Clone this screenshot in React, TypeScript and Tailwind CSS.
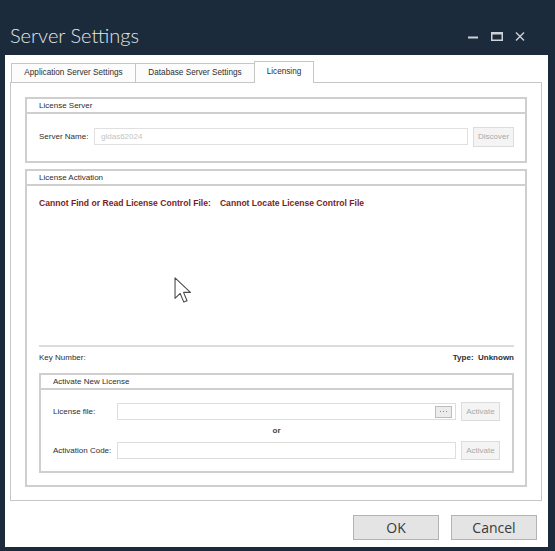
import React from "react";

function GroupBox({
  title,
  className,
  children,
}: {
  title: string;
  className: string;
  children: React.ReactNode;
}) {
  return (
    <div className={`flex flex-col border-2 border-[#cfcfcf] ${className}`}>
      <div className="flex h-[15px] shrink-0 items-center border-b-2 border-[#cfcfcf] pl-[12px] leading-none">
        {title}
      </div>
      {children}
    </div>
  );
}

function SmallButton({ label }: { label: string }) {
  return (
    <div className="ml-[5px] flex h-[19px] w-[39px] items-center justify-center border border-[#dcdcdc] bg-[#f4f4f4] leading-none text-[#a9a9a9]">
      {label}
    </div>
  );
}

export default function App() {
  return (
    <div className="relative h-[551px] w-[555px] overflow-hidden bg-[#1b2b3b] font-['Liberation_Sans',Arial,sans-serif] text-[8px] text-[#2e2e2e]">
      {/* Title bar */}
      <div className="flex h-[55px]">
        <div className="ml-[10px] mt-[25px] font-['Lato',sans-serif] text-[20px] font-light leading-none text-[#e3e6e9]">
          Server Settings
        </div>
        <div className="ml-auto mr-[30px] mt-[32px] flex h-[10px] items-start">
          <svg width="10" height="10" viewBox="0 0 10 10">
            <rect x="0" y="4.5" width="10" height="2" fill="#cdd2d7" />
          </svg>
          <svg className="ml-[13px]" width="12" height="9" viewBox="0 0 12 9">
            <rect x="0.75" y="0.75" width="10.5" height="7.5" fill="none" stroke="#cdd2d7" strokeWidth="1.5" />
            <rect x="0" y="0" width="12" height="2.5" fill="#cdd2d7" />
          </svg>
          <svg className="ml-[12px]" width="10" height="9" viewBox="0 0 10 9">
            <path d="M1 0.5 L9 8.5 M9 0.5 L1 8.5" stroke="#cdd2d7" strokeWidth="1.4" />
          </svg>
        </div>
      </div>

      {/* Window body */}
      <div className="ml-[5px] flex h-[492px] w-[543px] flex-col bg-white pt-[6px]">
        {/* Tabs */}
        <div className="relative z-10 -mb-px flex h-[22px] items-end pl-[6px] text-[8.2px]">
          <div className="mb-px flex h-[19px] w-[125px] items-center justify-center border border-b-0 border-[#c6c6c6] bg-[#fcfcfc] leading-none">
            Application Server Settings
          </div>
          <div className="-ml-px mb-px flex h-[19px] w-[120px] items-center justify-center border border-b-0 border-[#c6c6c6] bg-[#fcfcfc] leading-none">
            Database Server Settings
          </div>
          <div className="-ml-px flex h-[22px] w-[60px] items-center justify-center border border-b-0 border-[#c6c6c6] bg-white pb-[1px] leading-none">
            Licensing
          </div>
        </div>

        {/* Tab panel */}
        <div className="ml-[5px] flex h-[419px] w-[532px] flex-col border border-[#c6c6c6] bg-white px-[14px] pb-[13px] pt-[14px]">
          <GroupBox title="License Server" className="h-[66px] shrink-0">
            <div className="flex h-[47px] items-center pb-[2px] pl-[12px] pr-[11px]">
              <div className="w-[55px] leading-none">Server Name:</div>
              <div className="flex h-[17px] w-[374px] items-center border border-[#e0e0e0] pl-[6px] leading-none text-[#c3c3c3]">
                gldas62024
              </div>
              <div className="ml-[5px] flex h-[20px] w-[41px] items-center justify-center border border-[#dcdcdc] bg-[#f4f4f4] leading-none text-[#a9a9a9]">
                Discover
              </div>
            </div>
          </GroupBox>

          <GroupBox title="License Activation" className="mt-[6px] flex-1">
            <div className="flex flex-1 flex-col pb-[12px] pl-[12px] pr-[11px] pt-[12px]">
              <div className="flex h-[10px] items-center text-[8.6px] font-bold leading-none text-[#7a1d1d]">
                <span>Cannot Find or Read License Control File:</span>
                <span className="ml-[9px]">Cannot Locate License Control File</span>
              </div>
              <div className="flex-1" />
              <div className="h-[2px] bg-[#dcdcdc]" />
              <div className="flex h-[21px] items-center justify-between leading-none">
                <span>Key Number:</span>
                <span className="font-bold">Type:&nbsp; Unknown</span>
              </div>
              <GroupBox title="Activate New License" className="mt-[5px] h-[100px] shrink-0">
                <div className="flex flex-col pl-[12px] pr-[12px] pt-[12px]">
                  <div className="flex h-[19px] items-center">
                    <div className="w-[64px] leading-none">License file:</div>
                    <div className="flex h-[17px] w-[339px] items-center justify-end border border-[#dedede] pr-[3px]">
                      <div className="flex h-[12px] w-[17px] items-center justify-center gap-[2px] border border-[#bdbdbd] bg-[#ececec]">
                        <span className="h-[1px] w-[1px] bg-[#8a8a8a]" />
                        <span className="h-[1px] w-[1px] bg-[#8a8a8a]" />
                        <span className="h-[1px] w-[1px] bg-[#8a8a8a]" />
                      </div>
                    </div>
                    <SmallButton label="Activate" />
                  </div>
                  <div className="mt-[5px] h-[10px] text-center font-bold leading-[10px] text-[#444]">or</div>
                  <div className="mt-[5px] flex h-[19px] items-center">
                    <div className="w-[64px] leading-none">Activation Code:</div>
                    <div className="h-[17px] w-[339px] border border-[#dedede]" />
                    <SmallButton label="Activate" />
                  </div>
                </div>
              </GroupBox>
            </div>
          </GroupBox>
        </div>

        {/* Footer buttons */}
        <div className="mt-[14px] flex justify-end gap-[12px] pr-[11px]">
          <div className="flex h-[25px] w-[86px] items-center justify-center border border-[#b3b3b3] bg-[#e4e4e4] font-['Open_Sans',sans-serif] text-[14px] leading-none text-[#3a3a3a]">
            OK
          </div>
          <div className="flex h-[25px] w-[86px] items-center justify-center border border-[#b3b3b3] bg-[#e4e4e4] font-['Open_Sans',sans-serif] text-[14px] leading-none text-[#3a3a3a]">
            Cancel
          </div>
        </div>
      </div>

      {/* Mouse cursor */}
      <svg className="absolute left-[174px] top-[277px]" width="18" height="27" viewBox="0 0 13 20">
        <path
          d="M0.6 0.6 L0.6 15.8 L4.4 12.2 L7.1 18.6 L9.5 17.6 L6.9 11.4 L12 11.4 Z"
          fill="#ffffff"
          stroke="#4a4a4a"
          strokeWidth="0.8"
          strokeLinejoin="round"
        />
      </svg>
    </div>
  );
}
